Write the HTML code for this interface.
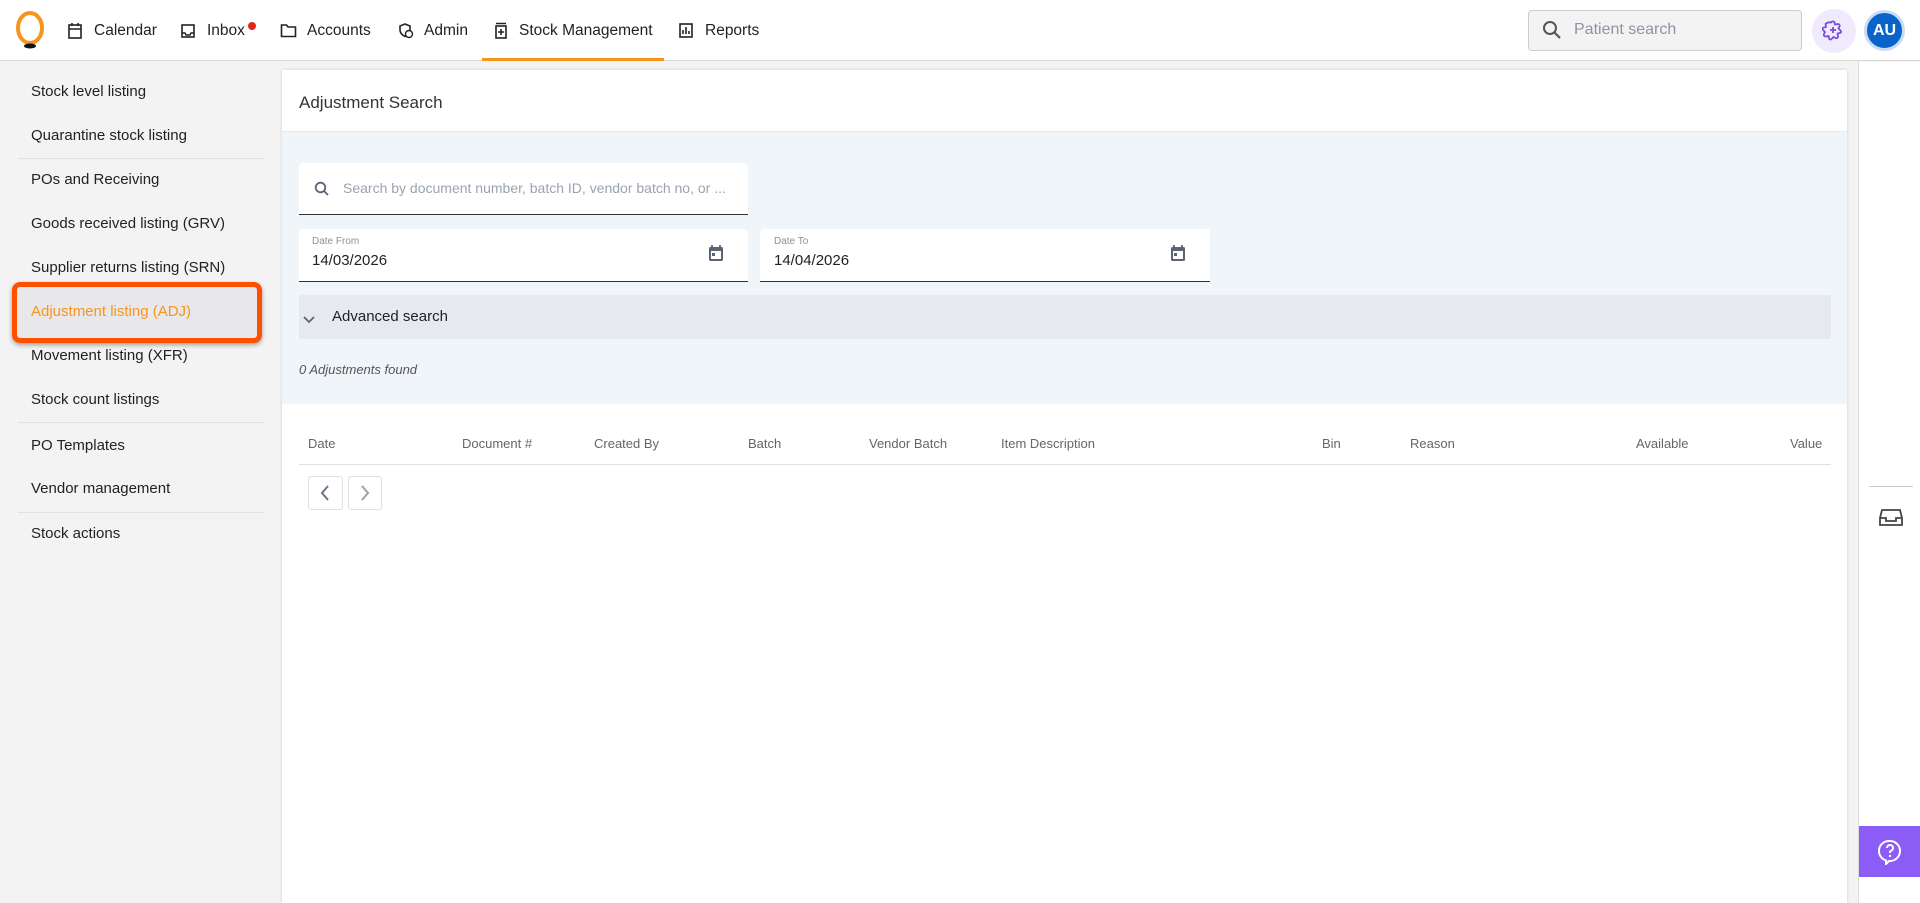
<!DOCTYPE html>
<html><head><meta charset="utf-8"><style>
*{box-sizing:border-box;margin:0;padding:0}
body{width:1920px;height:903px;overflow:hidden;background:#f3f3f3;font-family:"Liberation Sans",sans-serif;color:#1f2933;position:relative}
.hdr{position:absolute;left:0;top:0;width:1920px;height:61px;background:#fff;border-bottom:1px solid #d6d6d6}
.nav{position:absolute;top:22px;font-size:15.5px;color:#222}
.ni{position:absolute;top:22px}
.side{position:absolute;left:0;top:62px;width:267px;height:841px;background:#f3f3f3}
.si{position:absolute;left:31px;font-size:15px;color:#222}
.sep{position:absolute;left:18px;width:246px;height:1px;background:#dfe2e6}
.card{position:absolute;left:282px;top:70px;width:1565px;height:833px;background:#fff;box-shadow:0 0 3px rgba(0,0,0,.15)}
.rail{position:absolute;left:1858px;top:62px;width:62px;height:841px;background:#fff;border-left:1px solid #ddd}
.th{position:absolute;top:436px;font-size:13px;color:#666}
.box{position:absolute;background:#fff;border-radius:4px 4px 0 0;border-bottom:1.5px solid #333}
</style></head><body>
<div class="hdr">
  <svg style="position:absolute;left:13px;top:11px" width="34" height="40" viewBox="0 0 34 40"><ellipse cx="17" cy="17" rx="12" ry="15" fill="none" stroke="#f7941d" stroke-width="4"/><ellipse cx="17" cy="35" rx="6" ry="2.5" fill="#111"/></svg>
  <svg class="ni" style="left:67px" width="16" height="17" viewBox="0 0 16 17"><rect x="2" y="3" width="12" height="13" fill="none" stroke="#222" stroke-width="1.6"/><path d="M2 7h12M5 1v3M11 1v3" stroke="#222" stroke-width="1.6"/></svg>
  <span class="nav" style="left:94px">Calendar</span>
  <svg class="ni" style="left:180px" width="16" height="17" viewBox="0 0 16 17"><rect x="2" y="3" width="12" height="12" fill="none" stroke="#222" stroke-width="1.6"/><path d="M2 11h3l1 2h4l1-2h3" fill="none" stroke="#222" stroke-width="1.4"/></svg>
  <span class="nav" style="left:207px">Inbox</span>
  <div style="position:absolute;left:248px;top:22px;width:8px;height:8px;border-radius:50%;background:#e0281b"></div>
  <svg class="ni" style="left:280px" width="17" height="17" viewBox="0 0 17 17"><path d="M1.5 3h5l1.5 2h7.5v9.5h-14z" fill="none" stroke="#222" stroke-width="1.6"/></svg>
  <span class="nav" style="left:307px">Accounts</span>
  <svg class="ni" style="left:397px" width="17" height="17" viewBox="0 0 17 17"><path d="M8 2l5 2v4c0 3-2 5-5 6.5C5 13 3 11 3 8V4z" fill="none" stroke="#222" stroke-width="1.6"/><circle cx="12" cy="12" r="3.5" fill="#fff" stroke="#222" stroke-width="1.4"/></svg>
  <span class="nav" style="left:424px">Admin</span>
  <svg class="ni" style="left:494px" width="14" height="17" viewBox="0 0 14 17"><rect x="2" y="4" width="10" height="12" fill="none" stroke="#222" stroke-width="1.6"/><path d="M2 1.5h10M7 7v6M4 10h6" stroke="#222" stroke-width="1.6"/></svg>
  <span class="nav" style="left:519px">Stock Management</span>
  <div style="position:absolute;left:482px;top:58px;width:182px;height:3px;background:#f7941d"></div>
  <svg class="ni" style="left:678px" width="16" height="17" viewBox="0 0 16 17"><rect x="2" y="2" width="12" height="13" fill="none" stroke="#222" stroke-width="1.6"/><path d="M5 12V8M8 12V5M11 12V9" stroke="#222" stroke-width="1.6"/></svg>
  <span class="nav" style="left:705px">Reports</span>
  <div style="position:absolute;left:1528px;top:10px;width:274px;height:41px;background:#f3f3f3;border:1px solid #ccc;border-radius:4px"></div>
  <svg style="position:absolute;left:1542px;top:20px" width="20" height="20" viewBox="0 0 20 20"><circle cx="8" cy="8" r="6" fill="none" stroke="#555" stroke-width="2"/><path d="M12.5 12.5l5.5 5.5" stroke="#555" stroke-width="2.2"/></svg>
  <span style="position:absolute;left:1574px;top:21px;font-size:16px;color:#8b94a3">Patient search</span>
  <div style="position:absolute;left:1812px;top:9px;width:44px;height:44px;border-radius:50%;background:#efebfc"></div>
  <svg style="position:absolute;left:1822px;top:19px" width="24" height="24" viewBox="0 0 24 24"><path d="M9 3.5c1-1.5 3-1.5 3.5 0l.5 2 3-.5c1.5 0 2 1.5 1.5 2.5l-1 2 2 2c1 1 .5 2.5-1 2.5l-2 .5.5 3c0 1.5-1.5 2-2.5 1.5l-2-1-2 2c-1 1-2.5.5-2.5-1l-.5-2-3 .5c-1.5 0-2-1.5-1.5-2.5l1-2-2-2c-1-1-.5-2.5 1-2.5l2-.5-.5-3C5.5 3.5 7 3 8 3.5z" fill="none" stroke="#7c4ddc" stroke-width="1.8"/><path d="M11 8v6M8 11h6" stroke="#7c4ddc" stroke-width="1.8"/></svg>
  <div style="position:absolute;left:1864px;top:10px;width:41px;height:41px;border-radius:50%;background:#0a63c9;border:3px solid #c9dcf4;color:#fff;font-size:16px;font-weight:bold;text-align:center;line-height:35px">AU</div>
</div>
<div class="side">
  <span class="si" style="top:21px">Stock level listing</span>
  <span class="si" style="top:65px">Quarantine stock listing</span>
  <div class="sep" style="top:96px"></div>
  <span class="si" style="top:109px">POs and Receiving</span>
  <span class="si" style="top:153px">Goods received listing (GRV)</span>
  <span class="si" style="top:197px">Supplier returns listing (SRN)</span>
  <div style="position:absolute;left:12px;top:220px;width:250px;height:61px;border:5px solid #ff5000;border-radius:8px;background:#e8e8ea;box-shadow:0 2px 5px rgba(0,0,0,.35)"></div>
  <span class="si" style="top:241px;color:#f7941d">Adjustment listing (ADJ)</span>
  <span class="si" style="top:285px">Movement listing (XFR)</span>
  <span class="si" style="top:329px">Stock count listings</span>
  <div class="sep" style="top:360px"></div>
  <span class="si" style="top:375px">PO Templates</span>
  <span class="si" style="top:418px">Vendor management</span>
  <div class="sep" style="top:450px"></div>
  <span class="si" style="top:463px">Stock actions</span>
</div>
<div class="card">
  <span style="position:absolute;left:17px;top:23px;font-size:17px;color:#333">Adjustment Search</span>
  <div style="position:absolute;left:0;top:61px;width:1565px;height:273px;background:#f0f5fa;border-top:1px solid #e3e8ee"></div>
  <div class="box" style="left:17px;top:93px;width:449px;height:52px"></div>
  <svg style="position:absolute;left:32px;top:111px" width="16" height="16" viewBox="0 0 16 16"><circle cx="6.5" cy="6.5" r="4.8" fill="none" stroke="#5a6475" stroke-width="1.8"/><path d="M10 10l4 4" stroke="#5a6475" stroke-width="1.8"/></svg>
  <span style="position:absolute;left:61px;top:110px;font-size:14px;color:#9aa3b0">Search by document number, batch ID, vendor batch no, or ...</span>
  <div class="box" style="left:17px;top:159px;width:449px;height:53px"></div>
  <span style="position:absolute;left:30px;top:166px;font-size:10px;color:#8a929e">Date From</span>
  <span style="position:absolute;left:30px;top:182px;font-size:15px;color:#222">14/03/2026</span>
  <svg style="position:absolute;left:426px;top:174px" width="16" height="18" viewBox="0 0 16 18"><rect x="1" y="3" width="14" height="14" rx="1.5" fill="#5a6475"/><rect x="3" y="7" width="10" height="8" fill="#fff"/><rect x="4" y="9" width="3" height="3" fill="#5a6475"/><path d="M4 1v3M12 1v3" stroke="#5a6475" stroke-width="1.8"/></svg>
  <div class="box" style="left:478px;top:159px;width:450px;height:53px"></div>
  <span style="position:absolute;left:492px;top:166px;font-size:10px;color:#8a929e">Date To</span>
  <span style="position:absolute;left:492px;top:182px;font-size:15px;color:#222">14/04/2026</span>
  <svg style="position:absolute;left:888px;top:174px" width="16" height="18" viewBox="0 0 16 18"><rect x="1" y="3" width="14" height="14" rx="1.5" fill="#5a6475"/><rect x="3" y="7" width="10" height="8" fill="#fff"/><rect x="4" y="9" width="3" height="3" fill="#5a6475"/><path d="M4 1v3M12 1v3" stroke="#5a6475" stroke-width="1.8"/></svg>
  <div style="position:absolute;left:17px;top:225px;width:1532px;height:44px;background:#e6eaf0"></div>
  <svg style="position:absolute;left:21px;top:246px" width="12" height="8" viewBox="0 0 12 8"><path d="M1 1l5 5 5-5" fill="none" stroke="#5a6475" stroke-width="1.8"/></svg>
  <span style="position:absolute;left:50px;top:238px;font-size:15px;color:#222">Advanced search</span>
  <span style="position:absolute;left:17px;top:292px;font-size:13px;color:#555;font-style:italic">0 Adjustments found</span>
  <span class="th" style="left:26px;top:366px">Date</span>
  <span class="th" style="left:180px;top:366px">Document #</span>
  <span class="th" style="left:312px;top:366px">Created By</span>
  <span class="th" style="left:466px;top:366px">Batch</span>
  <span class="th" style="left:587px;top:366px">Vendor Batch</span>
  <span class="th" style="left:719px;top:366px">Item Description</span>
  <span class="th" style="left:1040px;top:366px">Bin</span>
  <span class="th" style="left:1128px;top:366px">Reason</span>
  <span class="th" style="left:1354px;top:366px">Available</span>
  <span class="th" style="left:1508px;top:366px">Value</span>
  <div style="position:absolute;left:17px;top:394px;width:1532px;height:1px;background:#dde1e6"></div>
  <div style="position:absolute;left:26px;top:406px;width:35px;height:34px;border:1px solid #dde1e6;border-radius:3px"></div>
  <svg style="position:absolute;left:38px;top:415px" width="10" height="16" viewBox="0 0 10 16"><path d="M8 1L2 8l6 7" fill="none" stroke="#6b7585" stroke-width="2"/></svg>
  <div style="position:absolute;left:66px;top:406px;width:34px;height:34px;border:1px solid #dde1e6;border-radius:3px"></div>
  <svg style="position:absolute;left:78px;top:415px" width="10" height="16" viewBox="0 0 10 16"><path d="M2 1l6 7-6 7" fill="none" stroke="#9aa3b0" stroke-width="2"/></svg>
</div>
<div class="rail">
  <div style="position:absolute;left:10px;top:424px;width:44px;height:1px;background:#ccc"></div>
  <svg style="position:absolute;left:19px;top:445px" width="26" height="20" viewBox="0 0 26 20"><path d="M4 3h18l2 8v7H2v-7z" fill="none" stroke="#444" stroke-width="1.8"/><path d="M2 11h6v3h10v-3h6" fill="none" stroke="#444" stroke-width="1.8"/></svg>
  <div style="position:absolute;left:0;top:764px;width:62px;height:51px;background:#8b5cf6"></div>
  <svg style="position:absolute;left:19px;top:777px" width="24" height="26" viewBox="0 0 24 26"><path d="M12 2a10 10 0 0 1 0 20h-1l-3 3v-3.5A10 10 0 0 1 12 2z" fill="none" stroke="#fff" stroke-width="2"/><path d="M9 9a3 3 0 1 1 4 2.8c-.7.3-1 .8-1 1.5V14" fill="none" stroke="#fff" stroke-width="2"/><circle cx="12" cy="17" r="1.2" fill="#fff"/></svg>
</div>
</body></html>
